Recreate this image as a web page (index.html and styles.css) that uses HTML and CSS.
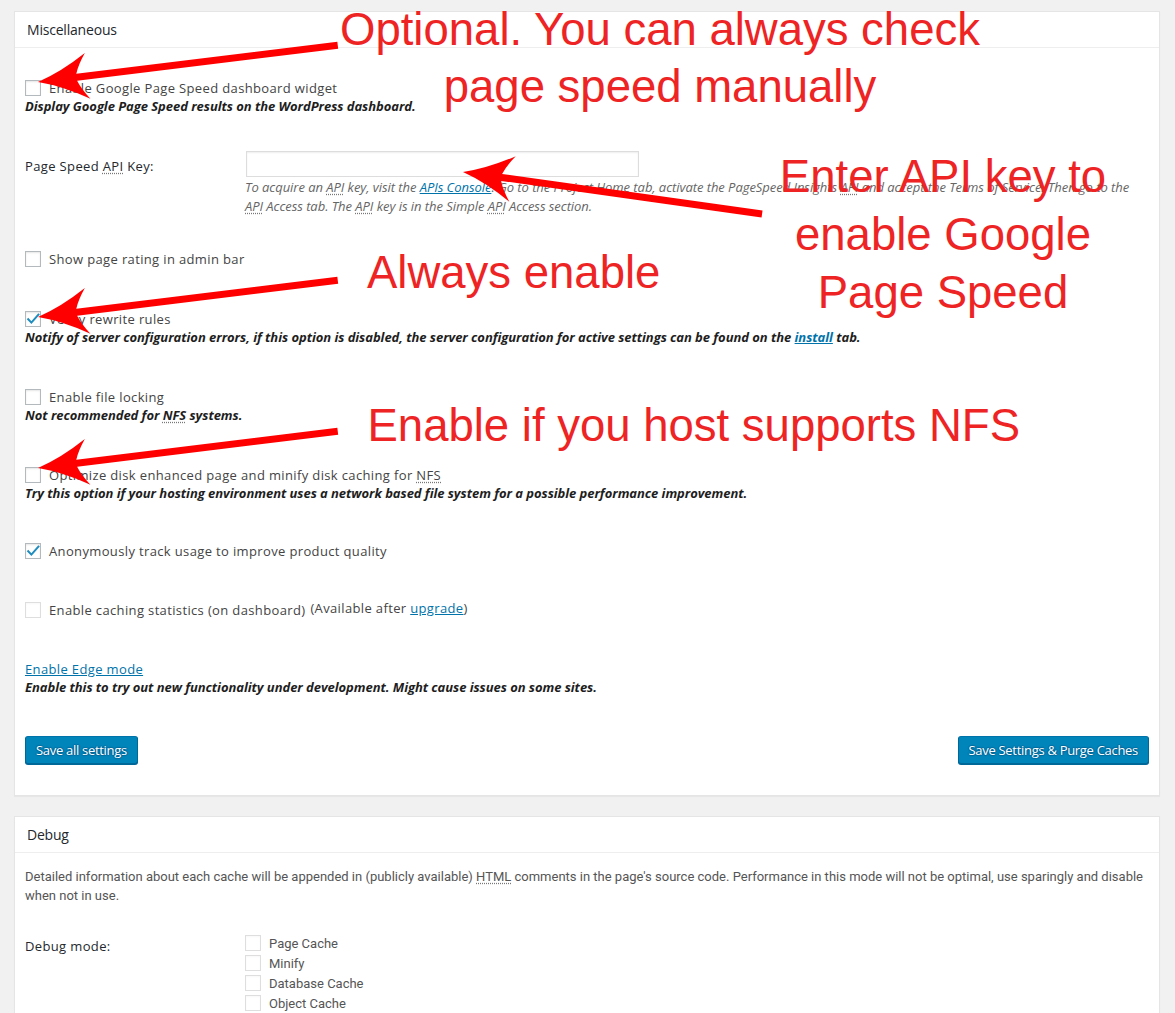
FILE: index.html
```html
<!DOCTYPE html>
<html lang="en">
<head>
<meta charset="utf-8">
<title>General Settings – Miscellaneous</title>
<link rel="stylesheet" href="styles.css">
</head>
<body>
<div class="page">
  <div class="postbox">
    <h3 class="hndle">Miscellaneous</h3>
    <div class="inside">
      <div class="opt">
        <label class="line"><span class="cb"></span><span>Enable Google Page Speed dashboard widget</span></label>
        <div class="desc">Display Google Page Speed results on the WordPress dashboard.</div>
      </div>

      <div class="field gap-35">
        <div class="th th-api">Page Speed <abbr title="Application Programming Interface">API</abbr> Key:</div>
        <div class="td">
          <input class="text-input" type="text" aria-label="Page Speed API Key">
          <p class="help">To acquire an <abbr>API</abbr> key, visit the <a href="#">APIs Console</a>. Go to the Project Home tab, activate the PageSpeed Insights <abbr>API</abbr> and accept the Terms of Service. Then go to the<br><abbr>API</abbr> Access tab. The <abbr>API</abbr> key is in the Simple <abbr>API</abbr> Access section.</p>
        </div>
      </div>

      <div class="opt gap-34">
        <label class="line"><span class="cb"></span><span>Show page rating in admin bar</span></label>
      </div>

      <div class="opt gap-42">
        <label class="line"><span class="cb"><svg class="tick" viewBox="0 0 16 16"><path d="M3.2 8.2 L6.4 11.6 L13.4 3.6"/></svg></span><span>Verify rewrite rules</span></label>
        <div class="desc">Notify of server configuration errors, if this option is disabled, the server configuration for active settings can be found on the <a href="#">install</a> tab.</div>
      </div>

      <div class="opt gap-42">
        <label class="line"><span class="cb"></span><span>Enable file locking</span></label>
        <div class="desc">Not recommended for <abbr>NFS</abbr> systems.</div>
      </div>

      <div class="opt gap-42">
        <label class="line"><span class="cb"></span><span>Optimize disk enhanced page and minify disk caching for <abbr>NFS</abbr></span></label>
        <div class="desc">Try this option if your hosting environment uses a network based file system for a possible performance improvement.</div>
      </div>

      <div class="opt gap-40">
        <label class="line"><span class="cb"><svg class="tick" viewBox="0 0 16 16"><path d="M3.2 8.2 L6.4 11.6 L13.4 3.6"/></svg></span><span>Anonymously track usage to improve product quality</span></label>
      </div>

      <div class="opt gap-41">
        <label class="line line-stats"><span class="cb cb-disabled"></span><span>Enable caching statistics (on dashboard)</span><span class="avail">(Available after <a href="#">upgrade</a>)</span></label>
      </div>

      <div class="opt gap-41">
        <div class="line"><a href="#">Enable Edge mode</a></div>
        <div class="desc">Enable this to try out new functionality under development. Might cause issues on some sites.</div>
      </div>

      <div class="actions gap-40">
        <button class="button-primary" type="button">Save all settings</button>
        <button class="button-primary" type="button">Save Settings &amp; Purge Caches</button>
      </div>
    </div>
  </div>

  <div class="postbox">
    <h3 class="hndle">Debug</h3>
    <div class="inside inside-debug">
      <p class="debug-intro">Detailed information about each cache will be appended in (publicly available) <abbr>HTML</abbr> comments in the page's source code. Performance in this mode will not be optimal, use sparingly and disable<br>when not in use.</p>
      <div class="field debug-field">
        <div class="th th-debug">Debug mode:</div>
        <div class="td">
          <label class="debug-line"><span class="cb cb-disabled"></span><span>Page Cache</span></label>
          <label class="debug-line"><span class="cb cb-disabled"></span><span>Minify</span></label>
          <label class="debug-line"><span class="cb cb-disabled"></span><span>Database Cache</span></label>
          <label class="debug-line"><span class="cb cb-disabled"></span><span>Object Cache</span></label>
        </div>
      </div>
    </div>
  </div>
</div>

<div class="annotations">
  <svg class="arrows" width="1175" height="1013" viewBox="0 0 1175 1013">
    <defs>
      <path id="arrow" d="M0,0 Q24,-7 50,-23 Q42,-12 39,-3.5 L302,-3.5 L302,3.5 L39,3.5 Q42,12 50,23 Q24,7 0,0 Z"/>
    </defs>
    <use href="#arrow" transform="translate(38,82) rotate(-7)"/>
    <use href="#arrow" transform="translate(463,172) rotate(8)"/>
    <use href="#arrow" transform="translate(38,317) rotate(-7)"/>
    <use href="#arrow" transform="translate(38,468) rotate(-7)"/>
  </svg>
  <div class="note note-optional">Optional. You can always check<br>page speed manually</div>
  <div class="note note-api">Enter API key to<br>enable Google<br>Page Speed</div>
  <div class="note note-always">Always enable</div>
  <div class="note note-nfs">Enable if you host supports NFS</div>
</div>
</body>
</html>
```

FILE: styles.css
```css
* { box-sizing: border-box; }

html, body { margin: 0; }

body {
  position: relative;
  background: #f1f1f1;
  font-family: "Open Sans", "Noto Sans", sans-serif;
  font-size: 13px;
  letter-spacing: 0.36px;
  color: #444;
  overflow: hidden;
  height: 1013px;
}

a { color: #0073aa; text-decoration: underline; }

abbr {
  text-decoration: underline dotted;
  text-underline-offset: 2px;
  text-decoration-color: #777;
}

.page {
  padding: 11px 15px 0 14px;
}

.postbox {
  background: #fff;
  border: 1px solid #e5e5e5;
  box-shadow: 0 1px 1px rgba(0, 0, 0, .04);
  margin-bottom: 20px;
}

.hndle {
  margin: 0;
  height: 36px;
  padding: 8px 12px;
  border-bottom: 1px solid #eee;
  font-size: 14px;
  font-weight: 400;
  line-height: 19px;
  letter-spacing: -0.2px;
  color: #23282d;
}

.inside {
  display: flex;
  flex-direction: column;
  padding: 31px 10px 31px 10px;
}

.gap-34 { margin-top: 34px; }
.gap-35 { margin-top: 35px; }
.gap-40 { margin-top: 40px; }
.gap-41 { margin-top: 41px; }
.gap-42 { margin-top: 42px; }

.opt { display: flex; flex-direction: column; }

.line {
  display: flex;
  align-items: center;
  gap: 8px;
  height: 18px;
  line-height: 18px;
  white-space: nowrap;
}

.line-stats { gap: 5px; }
.line-stats .cb { margin-right: 3px; }

.cb {
  flex: none;
  position: relative;
  width: 16px;
  height: 16px;
  border: 1px solid #b4b9be;
  background: #fff;
  box-shadow: inset 0 1px 2px rgba(0, 0, 0, .1);
}

.cb-disabled {
  border-color: rgba(200, 200, 200, .6);
  box-shadow: inset 0 1px 2px rgba(0, 0, 0, .03);
}

.tick {
  position: absolute;
  left: -1px;
  top: -1px;
  width: 16px;
  height: 16px;
  overflow: visible;
}

.tick path {
  fill: none;
  stroke: #1e8cbe;
  stroke-width: 2;
  stroke-linecap: square;
}

.avail { margin-top: -4px; }

.desc {
  line-height: 18px;
  font-style: italic;
  font-weight: 700;
  letter-spacing: -0.05px;
  color: #1e1e1e;
  white-space: nowrap;
}

.field { display: flex; }

.th {
  flex: none;
  width: 220px;
  color: #23282d;
}

.th-api { padding-top: 7px; line-height: 18px; }

.td { flex: 1; min-width: 0; }

.text-input {
  display: block;
  width: 393px;
  height: 26px;
  margin: 1px;
  border: 1px solid #ddd;
  box-shadow: inset 0 1px 2px rgba(0, 0, 0, .07);
  background: #fff;
  font: inherit;
}

.help {
  margin: 1px 0 0;
  line-height: 19px;
  font-style: italic;
  letter-spacing: -0.05px;
  color: #666;
  white-space: nowrap;
}

.actions {
  display: flex;
  justify-content: space-between;
}

.button-primary {
  height: 28px;
  line-height: 26px;
  padding: 0 10px 1px;
  font-family: inherit;
  font-size: 13px;
  letter-spacing: -0.3px;
  color: #fff;
  background: #0085ba;
  border: 1px solid #0073aa;
  border-color: #0073aa #006799 #006799;
  border-radius: 3px;
  box-shadow: 0 1px 0 #006799;
  text-shadow: 0 -1px 1px #006799, 1px 0 1px #006799, 0 1px 1px #006799, -1px 0 1px #006799;
  cursor: pointer;
}

.inside-debug { padding-top: 14px; }

.debug-intro {
  margin: 0;
  font-family: Roboto, "Open Sans", sans-serif;
  letter-spacing: 0;
  line-height: 19px;
  color: #555;
  white-space: nowrap;
}

.debug-field { margin-top: 28px; }

.th-debug { padding-top: 3px; line-height: 20px; }

.debug-line {
  display: flex;
  align-items: center;
  gap: 8px;
  height: 20px;
  font-family: Roboto, "Open Sans", sans-serif;
  letter-spacing: 0;
  color: #555;
}

/* screenshot annotations drawn over the page */
.annotations {
  position: absolute;
  left: 0;
  top: 0;
  width: 1175px;
  height: 1013px;
  pointer-events: none;
  letter-spacing: 0;
}

.arrows {
  position: absolute;
  left: 0;
  top: 0;
  fill: #ff0000;
}

.note {
  position: absolute;
  font-family: "Liberation Sans", Arial, sans-serif;
  font-size: 45.5px;
  line-height: 58px;
  color: #ee2424;
  white-space: nowrap;
}

.note-optional { left: 260px; top: 1px; width: 800px; text-align: center; line-height: 57px; }
.note-api { left: 743px; top: 148px; width: 400px; text-align: center; }
.note-always { left: 367px; top: 244px; }
.note-nfs { left: 367.5px; top: 397px; }
```
